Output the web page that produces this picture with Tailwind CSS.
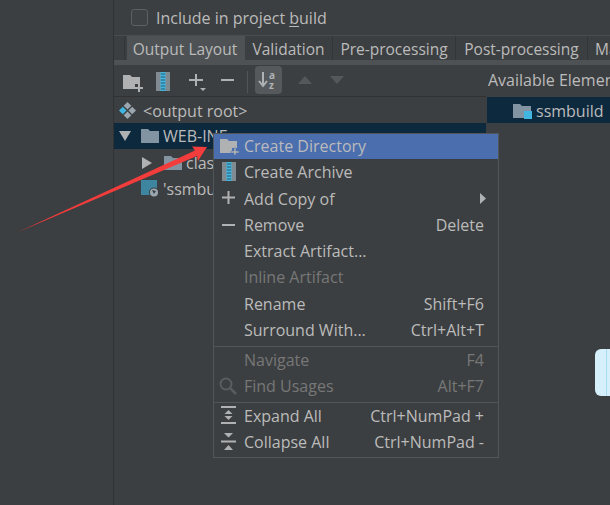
<!DOCTYPE html>
<html>
<head>
<meta charset="utf-8">
<script src="https://cdn.jsdelivr.net/npm/@tailwindcss/browser@4"></script>
</head>
<body class="m-0">
<div class="relative w-[610px] h-[505px] overflow-hidden bg-[#3c3f41] text-[#bbbbbb] text-[16px] leading-[20px] font-['Open_Sans',sans-serif] flex">
  <aside class="w-[113px] h-full border-r border-[#323232] shrink-0 box-content"></aside>
  <main class="flex-1 flex flex-col min-w-0">
    <div class="h-[36px] flex items-center gap-[8px] pl-[17px] border-b border-[#4a4c4e] shrink-0">
      <span class="w-[17px] h-[17px] rounded-[3px] border border-[#5e6060] bg-[#3f4244]"></span>
      <span class="whitespace-nowrap">Include in project <u class="underline-offset-2">b</u>uild</span>
    </div>
    <div class="h-[24px] flex items-stretch whitespace-nowrap text-[15.5px] shrink-0">
      <div class="w-[11px] bg-[#3c3f41] border-r border-[#333536] shrink-0"></div>
      <div class="w-[2px] shrink-0"></div>
      <div class="w-[118px] bg-[#4e5254] flex items-center justify-center shrink-0 pt-[1px] pr-[2px]">Output Layout</div>
      <div class="w-[88px] border-r border-[#333536] flex items-center justify-center shrink-0 pt-[1px]">Validation</div>
      <div class="w-[123px] border-r border-[#333536] flex items-center justify-center shrink-0 pt-[1px]">Pre-processing</div>
      <div class="w-[132px] border-r border-[#333536] flex items-center justify-center shrink-0 pt-[1px]">Post-processing</div>
      <div class="pl-[7px] flex items-center shrink-0 pt-[1px]">Maven</div>
    </div>
    <div class="h-[5px] bg-[#4e5254] shrink-0"></div>
    <div class="h-[32px] flex items-center shrink-0">
      <div class="w-[372px] h-full flex items-center relative shrink-0 border-b border-[#323232]">
        <svg class="absolute left-[9px] top-[9px]" width="20" height="18" viewBox="0 0 20 18"><path d="M0 1h7l2 2h8v7h-5v5H0z" fill="#afb1b3"/><path d="M15 10h2v3h3v2h-3v3h-2v-3h-3v-2h3z" fill="#afb1b3"/></svg>
        <svg class="absolute left-[42px] top-[7px]" width="14" height="19" viewBox="0 0 14 19"><rect x="0" y="0" width="14" height="19" fill="#7f8b91"/><rect x="4.500" y="0" width="5" height="19" fill="#40b6e0"/><path d="M5 2h4M5 5h4M5 8h4M5 11h4M5 14h4M5 17h4" stroke="#2b5c70" stroke-width="1"/></svg>
        <svg class="absolute left-[75px] top-[7px]" width="20" height="22" viewBox="0 0 20 22"><path d="M6 2h2v5h6v2H8v5H6V9H0V7h6z" fill="#afb1b3"/><path d="M11 16h6l-3 3z" fill="#afb1b3"/></svg>
        <div class="absolute left-[107px] top-[14px] w-[13px] h-[2px] bg-[#afb1b3]"></div>
        <div class="absolute left-[133px] top-[6px] w-px h-[22px] bg-[#515658]"></div>
        <div class="absolute left-[141px] top-[1px] w-[27px] h-[28px] rounded-[4px] bg-[#55595c] flex items-center justify-center">
          <svg width="22" height="20" viewBox="0 0 22 20"><path d="M5 2v13M1 11l4 5 4-5" fill="none" stroke="#afb1b3" stroke-width="2"/><text x="11" y="9" font-size="10" font-weight="700" fill="#afb1b3" font-family="Open Sans">a</text><text x="11" y="19" font-size="10" font-weight="700" fill="#afb1b3" font-family="Open Sans">z</text></svg>
        </div>
        <svg class="absolute left-[184px] top-[11px]" width="16" height="9"><path d="M0 8L7 0l7 8z" fill="#55585a"/></svg>
        <svg class="absolute left-[216px] top-[11px]" width="16" height="9"><path d="M0 0h14L7 8z" fill="#55585a"/></svg>
      </div>
      <div class="pl-[2px] whitespace-nowrap pb-[2px]">Available Elements</div>
    </div>
    <div class="flex flex-1 min-h-0">
      <div class="w-[372px] shrink-0 flex flex-col whitespace-nowrap">
        <div class="h-[26px] flex items-center pl-[4px] gap-[6px] pt-[1px]">
          <svg width="19" height="19" viewBox="0 0 19 19"><path d="M9.500 1l3.800 3.800-3.800 3.800-3.800-3.800z" fill="#9aa7b0"/><path d="M4.800 5.700l3.800 3.800-3.800 3.800L1 9.500z" fill="#40b6e0"/><path d="M14.200 5.700l3.800 3.800-3.800 3.800-3.800-3.800z" fill="#9aa7b0"/><path d="M9.500 10.400l3.800 3.800-3.800 3.800-3.800-3.800z" fill="#9aa7b0"/></svg>
          <span>&lt;output root&gt;</span>
        </div>
        <div class="h-[26px] flex items-center pl-[5px] bg-[#0d293e]">
          <svg width="12" height="10" viewBox="0 0 12 10"><path d="M0 0h12L6 10z" fill="#afb1b3"/></svg>
          <svg class="ml-[10px]" width="18" height="14" viewBox="0 0 18 14"><path d="M0 0h7l2 2h9v12H0z" fill="#8294a1"/></svg>
          <span class="ml-[4px]">WEB-INF</span>
        </div>
        <div class="h-[26px] flex items-center pl-[28px] pt-[2px]">
          <svg width="11" height="12" viewBox="0 0 11 12"><path d="M0 0l10 6-10 6z" fill="#afb1b3"/></svg>
          <svg class="ml-[11px]" width="18" height="14" viewBox="0 0 18 14"><path d="M0 0h7l2 2h9v12H0z" fill="#8294a1"/></svg>
          <span class="ml-[4px]">classes</span>
        </div>
        <div class="h-[26px] flex items-center pl-[27px] pt-[2px]">
          <svg width="20" height="18" viewBox="0 0 20 18"><rect x="0" y="0" width="16" height="15" fill="#3e86a0"/><circle cx="13" cy="12.500" r="5" fill="#3c3f41"/><circle cx="13" cy="12.500" r="4" fill="#9aa7b0"/><path d="M11 10l4 1-2 3z" fill="#3c3f41"/></svg>
          <span class="ml-[2px]">'ssmbuild'</span>
        </div>
      </div>
      <div class="flex-1 flex flex-col pl-[1px]">
        <div class="h-[26px] bg-[#0d293e] flex items-center pl-[26px] whitespace-nowrap pt-[1px]">
          <svg width="19" height="16" viewBox="0 0 19 16"><path d="M0 1h7l2 2h9v12H0z" fill="#8294a1"/><rect x="11" y="8" width="8" height="8" fill="#40b6e0"/></svg>
          <span class="ml-[4px]">ssmbuild</span>
        </div>
      </div>
    </div>
  </main>

  <!-- light tab at the right edge -->
  <div class="absolute left-[595px] top-[349px] w-[20px] h-[47px] rounded-[6px] bg-[#d6f0fb] flex">
    <div class="ml-[11px] w-px h-full bg-[#a9dcf0]"></div>
  </div>

  <!-- context menu -->
  <div class="absolute left-[213px] top-[133px] w-[286px] h-[325px] bg-[#3c3f41] border border-[#515658] flex flex-col whitespace-nowrap">
    <div class="h-[25px] shrink-0 bg-[#4b6eaf] flex items-center pl-[30px] pb-[2px] relative">
      <svg class="absolute left-[6px] top-[4px]" width="19" height="17" viewBox="0 0 19 17"><path d="M0 1h7l2 2h8v7h-5v5H0z" fill="#afb1b3"/><path d="M14 10h2v3h3v2h-3v2h-2v-2h-3v-2h3z" fill="#afb1b3" stroke="#4b6eaf" stroke-width="0.500"/></svg>
      Create Directory
    </div>
    <div class="h-[26px] shrink-0 flex items-center pl-[30px] relative">
      <svg class="absolute left-[8px] top-[3px]" width="14" height="19" viewBox="0 0 14 19"><rect width="14" height="19" fill="#7f8b91"/><rect x="4.500" width="5" height="19" fill="#40b6e0"/><path d="M5 2h4M5 5h4M5 8h4M5 11h4M5 14h4M5 17h4" stroke="#2b5c70"/></svg>
      Create Archive
    </div>
    <div class="h-[27px] shrink-0 flex items-center pl-[30px] relative">
      <svg class="absolute left-[8px] top-[6px]" width="13" height="13" viewBox="0 0 13 13"><path d="M5.500 0h2v5.500H13v2H7.500V13h-2V7.500H0v-2h5.500z" fill="#afb1b3"/></svg>
      Add Copy of
      <svg class="absolute right-[11px] top-[8px]" width="7" height="11"><path d="M0 0l6 5.500L0 11z" fill="#afb1b3"/></svg>
    </div>
    <div class="h-[26px] shrink-0 flex items-center justify-between pl-[30px] pr-[14px] relative">
      <div class="absolute left-[8px] top-[12px] w-[13px] h-[2px] bg-[#afb1b3]"></div>
      <span>Remove</span><span>Delete</span>
    </div>
    <div class="h-[26px] shrink-0 flex items-center pl-[30px]">Extract Artifact...</div>
    <div class="h-[26px] shrink-0 flex items-center pl-[30px] text-[#777777]">Inline Artifact</div>
    <div class="h-[27px] shrink-0 flex items-center justify-between pl-[30px] pr-[14px]"><span>Rename</span><span>Shift+F6</span></div>
    <div class="h-[26px] shrink-0 flex items-center justify-between pl-[30px] pr-[14px]"><span>Surround With...</span><span>Ctrl+Alt+T</span></div>
    <div class="h-[4px] shrink-0 border-b border-[#515658]"></div>
    <div class="h-[26px] shrink-0 flex items-center justify-between pl-[30px] pr-[14px] text-[#777777]"><span>Navigate</span><span>F4</span></div>
    <div class="h-[26px] shrink-0 flex items-center justify-between pl-[30px] pr-[14px] text-[#777777] relative">
      <svg class="absolute left-[5px] top-[4px]" width="18" height="18" viewBox="0 0 18 18"><circle cx="7" cy="7" r="5.500" fill="none" stroke="#5a5d5f" stroke-width="2"/><path d="M11 11l6 6" stroke="#5a5d5f" stroke-width="2.500"/></svg>
      <span>Find Usages</span><span>Alt+F7</span>
    </div>
    <div class="h-[4px] shrink-0 border-b border-[#515658]"></div>
    <div class="h-[26px] shrink-0 flex items-center justify-between pl-[30px] pr-[14px] relative">
      <svg class="absolute left-[7px] top-[3px]" width="15" height="18" viewBox="0 0 15 18"><path d="M0 0h15v2H0zM0 16h15v2H0z" fill="#afb1b3"/><path d="M7.500 4l4 4h-8zM7.500 14l4-4h-8z" fill="#afb1b3"/></svg>
      <span>Expand All</span><span>Ctrl+NumPad +</span>
    </div>
    <div class="h-[26px] shrink-0 flex items-center justify-between pl-[30px] pr-[14px] relative">
      <svg class="absolute left-[7px] top-[3px]" width="15" height="19" viewBox="0 0 15 19"><path d="M3 1h9L7.500 5.500zM0 8.500h15v2H0zM7.500 13l4.500 5H3z" fill="#afb1b3"/></svg>
      <span>Collapse All</span><span>Ctrl+NumPad -</span>
    </div>
  </div>

  <!-- red annotation arrow -->
  <svg class="absolute left-0 top-0" width="610" height="505" viewBox="0 0 610 505"><path d="M17 232.500L195 150.500L192 146.500L207 147L198 161L197 156z" fill="#f33c3c"/></svg>
</div>
</body>
</html>
